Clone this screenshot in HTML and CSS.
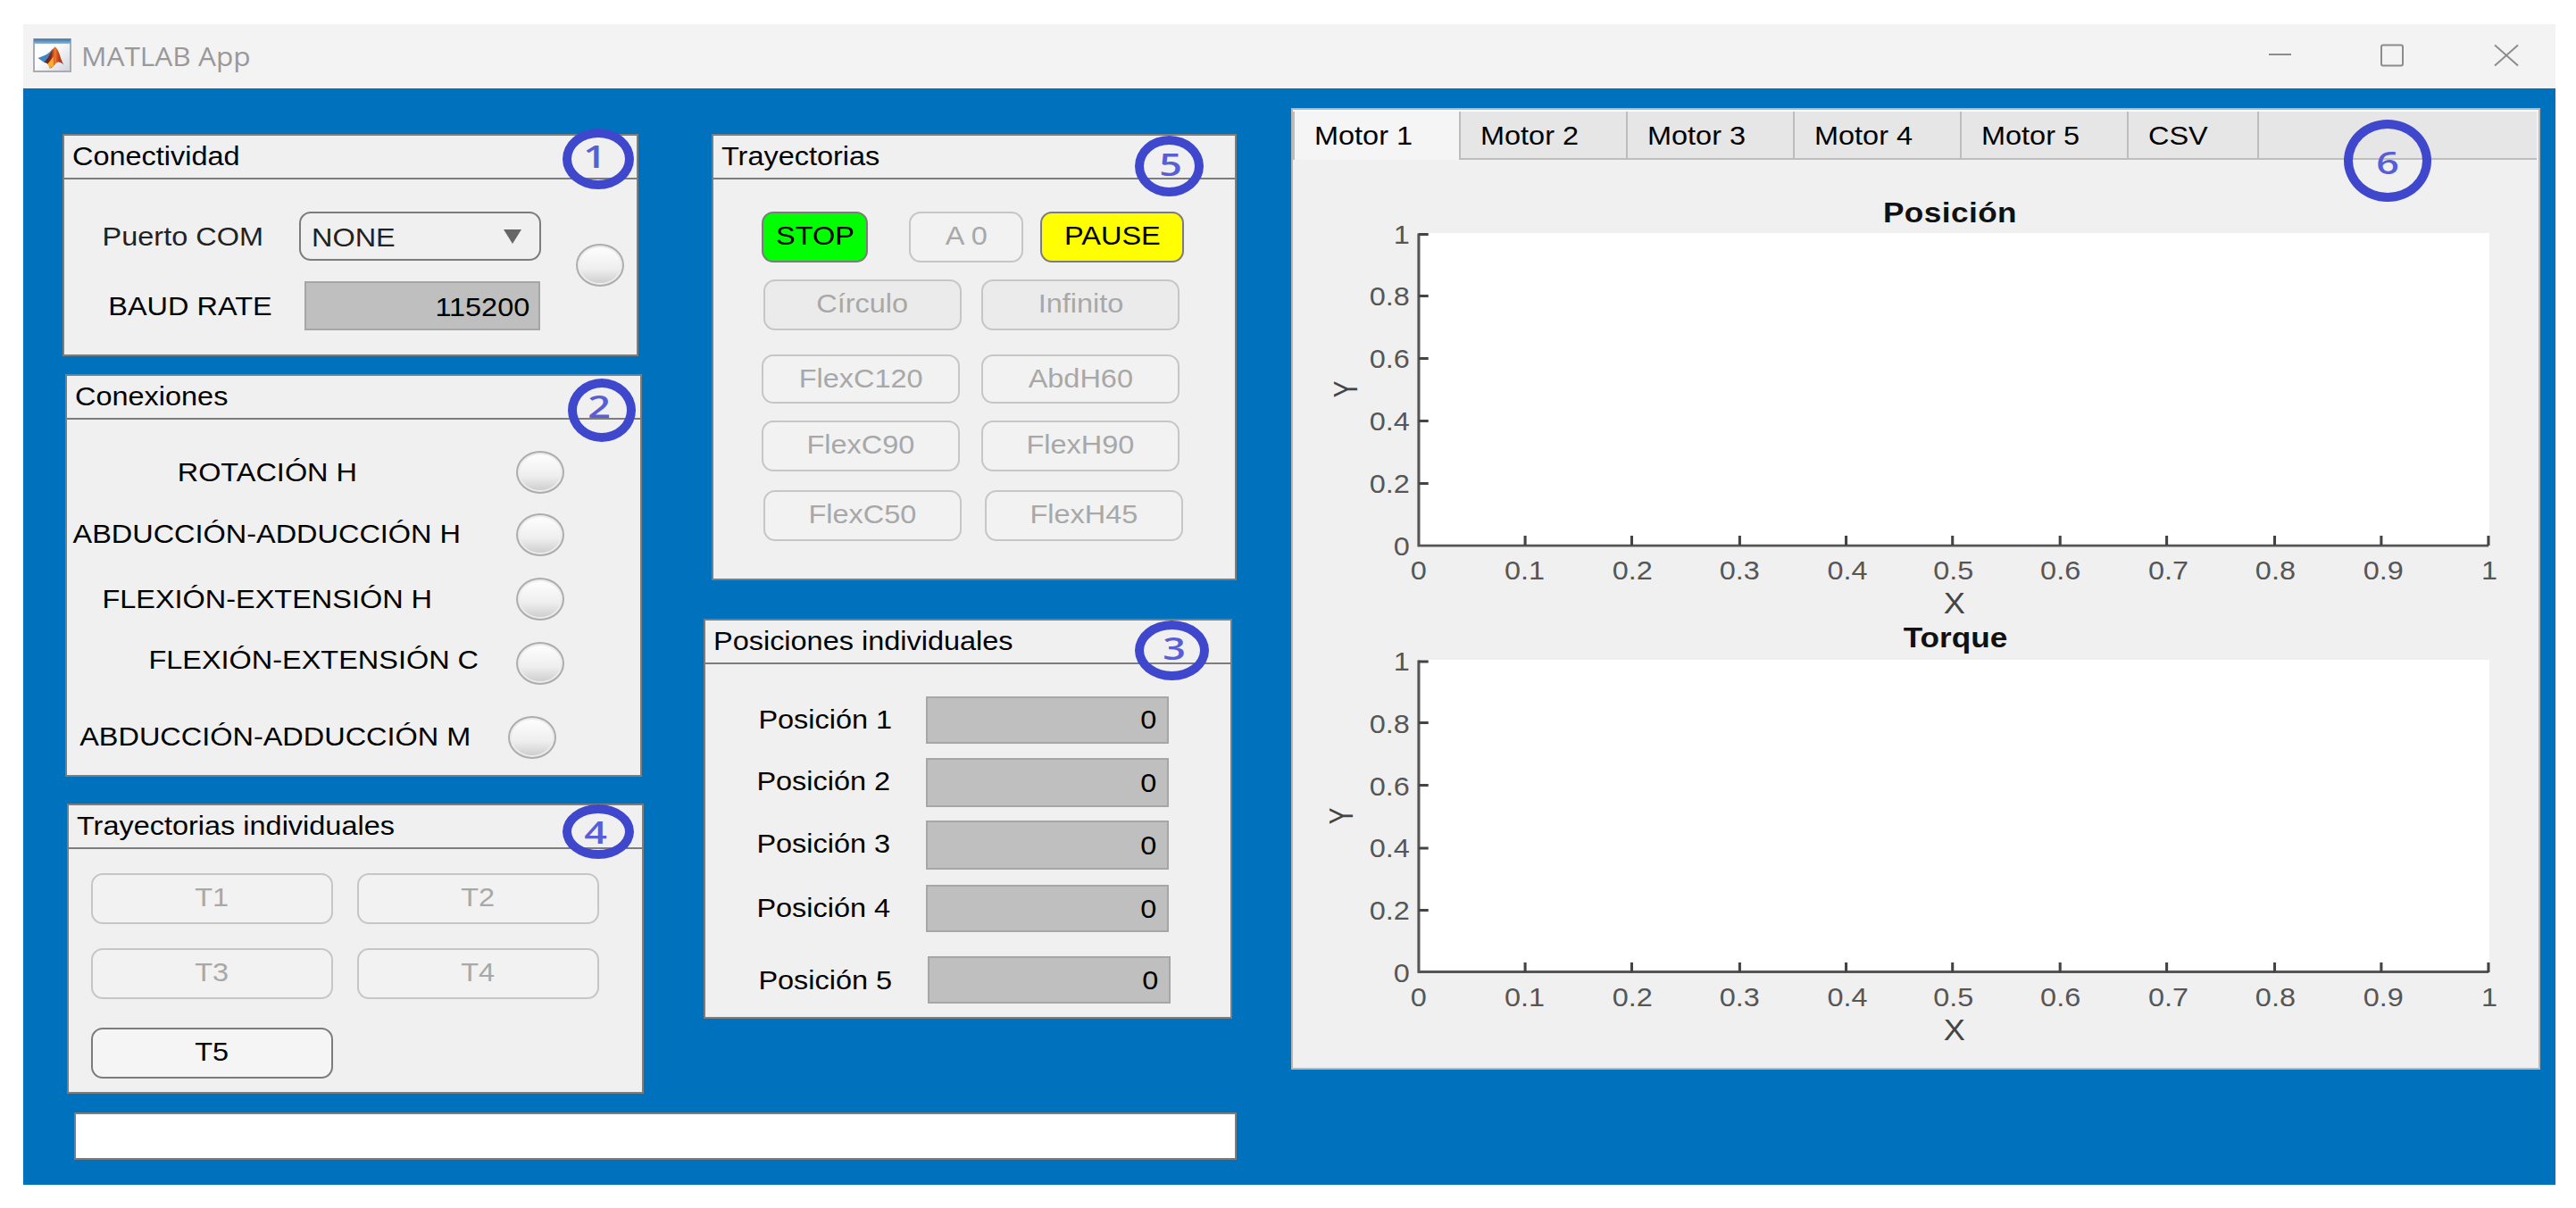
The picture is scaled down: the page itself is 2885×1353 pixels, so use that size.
FILE: index.html
```html
<!DOCTYPE html>
<html lang="es">
<head>
    <meta charset="UTF-8">
    <meta name="viewport" content="width=device-width, initial-scale=1.0">
    <title>MATLAB App</title>
    <link rel="stylesheet" href="styles.css">
</head>
<body>
    <div class="window">
        <header class="titlebar">
            <svg class="app-icon" viewBox="0 0 43 38" preserveAspectRatio="none">
                <defs>
                    <linearGradient id="bar" x1="0" y1="0" x2="0" y2="1">
                        <stop offset="0" stop-color="#3f6f9c"/>
                        <stop offset="1" stop-color="#8fb8d8"/>
                    </linearGradient>
                    <linearGradient id="paper" x1="0" y1="0" x2="1" y2="1">
                        <stop offset="0.4" stop-color="#ffffff"/>
                        <stop offset="1" stop-color="#cfd3dc"/>
                    </linearGradient>
                    <linearGradient id="peak" x1="0" y1="0" x2="1" y2="0">
                        <stop offset="0" stop-color="#4a2a3a"/>
                        <stop offset="0.35" stop-color="#8c2414"/>
                        <stop offset="0.55" stop-color="#ee7a28"/>
                        <stop offset="0.75" stop-color="#c23a16"/>
                        <stop offset="1" stop-color="#a82412"/>
                    </linearGradient>
                </defs>
                <rect x="1" y="1" width="41" height="36" fill="url(#paper)" stroke="#a9adb3" stroke-width="2"/>
                <rect x="1" y="0.5" width="41" height="5.5" fill="url(#bar)"/>
                <path d="M5.500 22 L13 19 Q18 17 22 11.500 L20 24 L12.500 27 Z" fill="#3f86c4"/>
                <path d="M12.500 27 L17 21 Q21 13 24.500 9.300 Q28 12 30 19 Q32 26 34.500 29.500 Q29.500 25 26 27.500 Q22 33 18.700 33.500 Q17.500 27 12.500 27 Z" fill="url(#peak)"/>
                <path d="M16.500 28.500 L23 20 L23 31 L18.700 33.500 Z" fill="#fba92b"/>
            </svg>
            <span class="app-name">MATLAB App</span>
            <svg class="win-buttons" viewBox="0 0 281 28">
                <path d="M1 13H26" />
                <rect x="127" y="2.500" width="24" height="23" rx="2" />
                <path d="M254 2.500L280 25.500M280 2.500L254 25.500" />
            </svg>
        </header>

        <main class="stage">
            <div class="left">
                <div class="columns">
                    <div class="col-1">
                        <section class="panel conectividad">
                            <h3><span>Conectividad</span></h3>
                            <div class="con-body">
                                <div class="con-form">
                                    <div class="form-row">
                                        <label><span>Puerto COM</span></label>
                                        <div class="select"><span>NONE</span><i class="arrow"></i></div>
                                    </div>
                                    <div class="form-row">
                                        <label class="baud"><span>BAUD RATE</span></label>
                                        <div class="num"><span>115200</span></div>
                                    </div>
                                </div>
                                <i class="lamp"></i>
                            </div>
                            <div class="badge b1"><b>1</b></div>
                        </section>

                        <section class="panel conexiones">
                            <h3><span>Conexiones</span></h3>
                            <div class="lamp-row r1"><label><span>ROTACIÓN H</span></label><i class="lamp"></i></div>
                            <div class="lamp-row r2"><label><span>ABDUCCIÓN-ADDUCCIÓN H</span></label><i class="lamp"></i></div>
                            <div class="lamp-row r3"><label><span>FLEXIÓN-EXTENSIÓN H</span></label><i class="lamp"></i></div>
                            <div class="lamp-row r4"><label><span>FLEXIÓN-EXTENSIÓN C</span></label><i class="lamp"></i></div>
                            <div class="lamp-row r5"><label><span>ABDUCCIÓN-ADDUCCIÓN M</span></label><i class="lamp"></i></div>
                            <div class="badge b2"><b>2</b></div>
                        </section>

                        <section class="panel individuales">
                            <h3><span>Trayectorias individuales</span></h3>
                            <div class="t-grid">
                                <button disabled><span>T1</span></button>
                                <button disabled><span>T2</span></button>
                                <button disabled><span>T3</span></button>
                                <button disabled><span>T4</span></button>
                                <button class="t5"><span>T5</span></button>
                            </div>
                            <div class="badge b4"><b>4</b></div>
                        </section>
                    </div>

                    <div class="col-2">
                        <section class="panel trayectorias">
                            <h3><span>Trayectorias</span></h3>
                            <div class="btn-row controls">
                                <button class="stop"><span>STOP</span></button>
                                <button class="zero" disabled><span>A 0</span></button>
                                <button class="pause"><span>PAUSE</span></button>
                            </div>
                            <div class="btn-row shapes">
                                <button disabled><span>Círculo</span></button>
                                <button disabled><span>Infinito</span></button>
                            </div>
                            <div class="btn-row flex-120">
                                <button disabled><span>FlexC120</span></button>
                                <button disabled><span>AbdH60</span></button>
                            </div>
                            <div class="btn-row flex-90">
                                <button disabled><span>FlexC90</span></button>
                                <button disabled><span>FlexH90</span></button>
                            </div>
                            <div class="btn-row flex-50">
                                <button disabled><span>FlexC50</span></button>
                                <button disabled><span>FlexH45</span></button>
                            </div>
                            <div class="badge b5"><b>5</b></div>
                        </section>

                        <section class="panel posiciones">
                            <h3><span>Posiciones individuales</span></h3>
                            <div class="pos-row p1"><label><span>Posición 1</span></label><div class="num"><span>0</span></div></div>
                            <div class="pos-row p2"><label><span>Posición 2</span></label><div class="num"><span>0</span></div></div>
                            <div class="pos-row p3"><label><span>Posición 3</span></label><div class="num"><span>0</span></div></div>
                            <div class="pos-row p4"><label><span>Posición 4</span></label><div class="num"><span>0</span></div></div>
                            <div class="pos-row p5"><label><span>Posición 5</span></label><div class="num"><span>0</span></div></div>
                            <div class="badge b3"><b>3</b></div>
                        </section>
                    </div>
                </div>
                <div class="message"></div>
            </div>

            <section class="tabgroup">
                <nav class="tabs">
                    <div class="tab active"><span>Motor 1</span></div>
                    <div class="tab"><span>Motor 2</span></div>
                    <div class="tab"><span>Motor 3</span></div>
                    <div class="tab"><span>Motor 4</span></div>
                    <div class="tab"><span>Motor 5</span></div>
                    <div class="tab csv"><span>CSV</span></div>
                    <div class="tab-rest"></div>
                </nav>

                <svg class="axes pos" viewBox="0 0 1269 514" preserveAspectRatio="none">
                    <rect class="plot" x="128" y="82" width="1091" height="350"/>
                    <path class="axis" d="M128.200 82.500V433.200M127 432.200H1218.200"/>
                    <path class="tick" d="M128 83.500h10M128 152.500h10M128 222.500h10M128 292.500h10M128 362.500h10"/>
                    <path class="tick" d="M236.600 432v-11M345.200 432v-11M455.200 432v-11M563.600 432v-11M672 432v-11M781.600 432v-11M890.200 432v-11M1000.200 432v-11M1108.800 432v-11M1218 432v-11"/>
                    <text class="title wide" x="669.500" y="70">Posición</text>
                    <g class="ylabels">
                        <text x="119" y="94">1</text>
                        <text x="119" y="163">0.8</text>
                        <text x="119" y="233">0.6</text>
                        <text x="119" y="303">0.4</text>
                        <text x="119" y="373">0.2</text>
                        <text x="119" y="443">0</text>
                    </g>
                    <g class="xlabels">
                        <text x="128" y="470">0</text>
                        <text x="236" y="470">0.1</text>
                        <text x="346" y="470">0.2</text>
                        <text x="455" y="470">0.3</text>
                        <text x="565" y="470">0.4</text>
                        <text x="673" y="470">0.5</text>
                        <text x="782" y="470">0.6</text>
                        <text x="892" y="470">0.7</text>
                        <text x="1001" y="470">0.8</text>
                        <text x="1111" y="470">0.9</text>
                        <text x="1219" y="470">1</text>
                    </g>
                    <text class="name" x="674" y="508">X</text>
                    <text class="name" transform="translate(65.500 257) rotate(-90) scale(0.85 1)">Y</text>
                </svg>

                <svg class="axes torque" viewBox="0 0 1269 502" preserveAspectRatio="none">
                    <rect class="plot" x="128" y="46" width="1091" height="350"/>
                    <path class="axis" d="M128.200 46.500V396.500M127 395.500H1218.200"/>
                    <path class="tick" d="M128 48h10M128 116.500h10M128 186.500h10M128 257h10M128 326.500h10"/>
                    <path class="tick" d="M236.600 396v-11M345.200 396v-11M455.200 396v-11M563.600 396v-11M672 396v-11M781.600 396v-11M890.200 396v-11M1000.200 396v-11M1108.800 396v-11M1218 396v-11"/>
                    <text class="title" x="675" y="32">Torque</text>
                    <g class="ylabels">
                        <text x="119" y="58">1</text>
                        <text x="119" y="128">0.8</text>
                        <text x="119" y="198">0.6</text>
                        <text x="119" y="267">0.4</text>
                        <text x="119" y="337">0.2</text>
                        <text x="119" y="407">0</text>
                    </g>
                    <g class="xlabels">
                        <text x="128" y="434">0</text>
                        <text x="236" y="434">0.1</text>
                        <text x="346" y="434">0.2</text>
                        <text x="455" y="434">0.3</text>
                        <text x="565" y="434">0.4</text>
                        <text x="673" y="434">0.5</text>
                        <text x="782" y="434">0.6</text>
                        <text x="892" y="434">0.7</text>
                        <text x="1001" y="434">0.8</text>
                        <text x="1111" y="434">0.9</text>
                        <text x="1219" y="434">1</text>
                    </g>
                    <text class="name" x="674" y="472">X</text>
                    <text class="name" transform="translate(61 221) rotate(-90) scale(0.85 1)">Y</text>
                </svg>
                <div class="badge b6"><b>6</b></div>
            </section>
        </main>
    </div>
</body>
</html>
```

FILE: styles.css
```css
* {
    box-sizing: border-box;
}
body {
    margin: 0;
    padding: 27px 0 0 26px;
    background: #ffffff;
    font-family: "Liberation Sans", Arial, sans-serif;
    font-size: 29.5px;
    line-height: 34px;
    color: #000;
    white-space: nowrap;
    overflow: hidden;
}
.window {
    width: 2836px;
    height: 1300px;
    background: #0072bd;
}

/* title bar */
.titlebar {
    display: flex;
    align-items: center;
    height: 72px;
    padding: 0 41px 0 11px;
    background: #f3f3f3;
}
.app-icon {
    width: 43px;
    height: 38px;
    margin-bottom: 2px;
}
.app-name {
    margin-left: 11px;
    font-family: "Open Sans", sans-serif;
    font-size: 29px;
    color: #999;
    transform: scaleX(1.09);
    transform-origin: left;
}
.win-buttons {
    width: 281px;
    height: 28px;
    margin-left: auto;
    margin-bottom: 2px;
    fill: none;
    stroke: #8c8c8c;
    stroke-width: 2;
}

.stage {
    display: flex;
    height: 1228px;
}
.left {
    width: 1359px;
    padding-top: 51px;
}
.columns {
    display: flex;
    height: 1096px;
}
.col-1 {
    width: 695px;
}

/* panels */
.panel {
    position: relative;
    background: #f0f0f0;
    border: 2px solid #7d7d7d;
}
.panel h3 {
    margin: 0;
    height: 49px;
    padding: 6px 0 0 9px;
    border-bottom: 2px solid #7d7d7d;
    font-size: 29.5px;
    font-weight: normal;
}
/* every label is drawn a bit wider than the font */
.panel span,
.tab span {
    display: inline-block;
    transform: scaleX(1.1);
}
.panel h3 span,
.select span,
.tab span {
    transform-origin: left;
}
.panel label {
    text-align: right;
}
.panel label span,
.num span {
    transform-origin: right;
}
.num {
    height: 55px;
    padding: 10px 12px 0 0;
    text-align: right;
    background: #bfbfbf;
    border: 2px solid #a6a6a6;
}
.lamp {
    display: block;
    width: 54px;
    height: 48px;
    border: 2px solid #adadad;
    border-radius: 50%;
    background: linear-gradient(#fcfcfc 10%, #eeeeee 60%, #cfcfcf 95%);
    box-shadow: inset 0 0 0 2px #ececec;
}
button {
    height: 57px;
    padding: 0 0 3px;
    border: 2px solid #7c7c7c;
    border-radius: 13px;
    background: #f5f5f5;
    font-family: inherit;
    font-size: 29.5px;
    line-height: 34px;
    color: #000;
}
button:disabled {
    border-color: #c6c6c6;
    background: #f2f2f2;
    color: #a8a8a8;
}

.conectividad {
    width: 645px;
    height: 249px;
    margin-left: 44px;
}
.con-body {
    display: flex;
}
.con-form {
    width: 534px;
    padding-top: 36px;
}
.form-row {
    display: flex;
    align-items: center;
    height: 55px;
    margin-bottom: 23px;
}
.form-row label {
    width: 223px;
    color: #222;
}
.form-row .baud {
    width: 233px;
    color: #000;
}
.select {
    display: flex;
    align-items: center;
    justify-content: space-between;
    width: 271px;
    height: 55px;
    margin-left: 40px;
    padding: 3px 20px 0 12px;
    border: 2px solid #7c7c7c;
    border-radius: 13px;
    color: #222;
}
.arrow {
    border-left: 10.5px solid transparent;
    border-right: 10.5px solid transparent;
    border-top: 16px solid #666;
    margin-bottom: 3px;
}
.form-row .num {
    width: 264px;
    margin-left: 36px;
    padding-right: 10px;
}
.con-body .lamp {
    margin: 72px 0 0 39px;
}

.conexiones {
    width: 646px;
    height: 451px;
    margin: 20px 0 0 47px;
}
.lamp-row {
    display: flex;
    align-items: center;
    height: 48px;
}
.r1 { margin-top: 35px; gap: 178px; }
.r1 label { width: 325px; }
.r2 { margin-top: 22px; gap: 62px; }
.r2 label { width: 441px; padding-bottom: 2px; }
.r3 { margin-top: 24px; gap: 94px; }
.r3 label { width: 409px; }
.r4 { margin-top: 24px; gap: 42px; }
.r4 label { width: 461px; padding-bottom: 8px; }
.r5 { margin-top: 35px; gap: 42px; }
.r5 label { width: 452px; padding-bottom: 3px; }

.individuales {
    width: 646px;
    height: 325px;
    margin: 30px 0 0 49px;
}
.t-grid {
    display: grid;
    grid-template-columns: 271px 271px;
    column-gap: 27px;
    row-gap: 27px;
    padding: 27px 0 0 25px;
}
.t5 {
    margin-top: 5px;
}

.trayectorias {
    width: 588px;
    height: 500px;
    margin-left: 76px;
}
.btn-row {
    display: flex;
    padding-left: 54px;
}
.btn-row button {
    width: 222px;
}
.controls { margin-top: 36px; }
.controls button { padding-bottom: 4px; }
.controls .stop { width: 119px; background: #00ff00; }
.controls .zero { width: 128px; margin-left: 46px; }
.controls .pause { width: 161px; margin-left: 19px; background: #ffff00; }
.shapes { margin-top: 19px; gap: 22px; padding-left: 56px; }
.shapes button:disabled { background: #ebebeb; }
.flex-120 { margin-top: 27px; gap: 24px; }
.flex-120 button { height: 55px; padding-bottom: 1px; }
.flex-90 { margin-top: 19px; gap: 24px; }
.flex-50 { margin-top: 21px; gap: 26px; padding-left: 56px; }

.posiciones {
    width: 592px;
    height: 448px;
    margin: 43px 0 0 67px;
}
.pos-row {
    display: flex;
    align-items: center;
    gap: 38px;
}
.pos-row label { width: 209px; padding-right: 2px; }
.pos-row .num { width: 272px; }
.p1 { margin-top: 36px; }
.p1 .num { height: 53px; padding-top: 7px; }
.p1 label { padding: 0 0 1px; }
.p2 { margin-top: 16px; }
.p2 .num, .p3 .num { padding-top: 9px; }
.p3 { margin-top: 15px; }
.p4 { margin-top: 17px; }
.p4 .num { height: 53px; padding-top: 8px; }
.p4 label { padding-bottom: 2px; }
.p5 { margin-top: 27px; padding-left: 2px; }
.p5 .num { height: 53px; padding-top: 8px; }
.p2 label, .p3 label { padding-bottom: 3px; }

.message {
    width: 1302px;
    height: 53px;
    margin-left: 57px;
    background: #fff;
    border: 2px solid #7d7d7d;
}

/* tabs and plots */
.tabgroup {
    position: relative;
    width: 1399px;
    height: 1077px;
    margin: 22px 0 0 61px;
    background: #f0f0f0;
    border: 2px solid #b8b8b8;
}
.tabs {
    display: flex;
    height: 56px;
    padding: 0 2px 0 0;
    border-top: 2px solid #fafafa;
}
.tab {
    width: 187px;
    padding: 10px 0 0 22px;
    background: #e6e6e6;
    border-right: 2px solid #bdbdbd;
    border-bottom: 2px solid #bdbdbd;
}
.tab.active {
    width: 188px;
    background: #f5f5f5;
    border-left: 2px solid #bdbdbd;
    border-bottom: none;
}
.tab.csv {
    width: 146px;
}
.tab-rest {
    flex: 1;
    background: #e6e6e6;
    border-bottom: 2px solid #bdbdbd;
}
.axes {
    display: block;
    width: 1395px;
}
.pos { height: 514px; }
.torque { height: 502px; }
.axes text {
    font-size: 29.5px;
    fill: #565656;
    text-anchor: middle;
}
.axes .ylabels text {
    text-anchor: end;
}
.axes .title {
    font-size: 32px;
    font-weight: bold;
    fill: #111;
}
.axes .wide {
    letter-spacing: 0.4px;
}
.axes .name {
    font-size: 33px;
    fill: #444;
}
.plot { fill: #fff; }
.axis, .tick {
    fill: none;
    stroke: #555;
    stroke-width: 2.8;
}
.tick { stroke: #444; }

/* numbered marks over the panels */
.badge {
    position: absolute;
    display: flex;
    align-items: center;
    justify-content: center;
    border: 10px solid #3f48cc;
    border-radius: 50%;
}
.badge b {
    font-family: "Open Sans", sans-serif;
    font-size: 35px;
    font-weight: 600;
    color: #5a5ed4;
    transform: scaleX(1.28);
}
.b1 { left: 558px; top: -8px; width: 80px; height: 68px; padding: 0 8px 7px 0; }
.b2 { left: 561px; top: 3px; width: 76px; height: 71px; padding: 0 6px 10px 0; }
.b4 { left: 553px; top: -1px; width: 80px; height: 61px; padding-right: 6px; }
.b5 { left: 472px; top: 0; width: 77px; height: 68px; padding: 0 0 4px 3px; }
.b3 { left: 481px; top: 0; width: 83px; height: 67px; padding: 0 0 6px 6px; }
.b6 { left: 1177px; top: 11px; width: 98px; height: 92px; padding-top: 3px; }
```
